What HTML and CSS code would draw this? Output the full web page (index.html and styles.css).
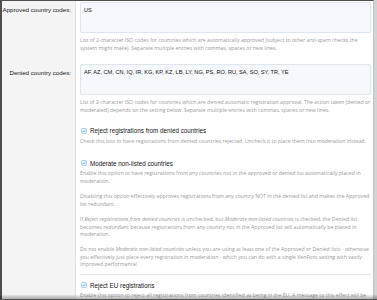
FILE: index.html
```html
<!DOCTYPE html>
<html>
<head>
    <title>Registration country options</title>
    <link rel="stylesheet" href="styles.css">
</head>
<body>

<div class="frame">

    <dl class="row row--first">
        <dt>Approved country codes:</dt>
        <dd>
            <textarea class="input">US</textarea>
            <p class="hint">List of 2-character ISO codes for countries which are automatically approved (subject to other anti-spam checks the<br>system might make). Separate multiple entries with commas, spaces or new lines.</p>
        </dd>
    </dl>

    <dl class="row">
        <dt>Denied country codes:</dt>
        <dd>
            <textarea class="input">AF, AZ, CM, CN, IQ, IR, KG, KP, KZ, LB, LY, NG, PS, RO, RU, SA, SO, SY, TR, YE</textarea>
            <p class="hint">List of 2-character ISO codes for countries which are denied automatic registration approval. The action taken (denied or<br>moderated) depends on the setting below. Separate multiple entries with commas, spaces or new lines.</p>
        </dd>
    </dl>

    <dl class="row row--checks">
        <dt></dt>
        <dd>
            <div class="check">
                <label class="check-label">
                    <svg class="box" viewBox="0 0 12 12"><rect x="1" y="1" width="10" height="10" rx="2"/><path d="M3.4 6.2 L5.2 8 L8.7 4.3"/></svg>
                    Reject registrations from denied countries
                </label>
                <p class="hint">Check this box to have registrations from denied countries rejected. Uncheck it to place them into moderation instead.</p>
            </div>

            <div class="check check--gap">
                <label class="check-label">
                    <svg class="box" viewBox="0 0 12 12"><rect x="1" y="1" width="10" height="10" rx="2"/><path d="M3.4 6.2 L5.2 8 L8.7 4.3"/></svg>
                    Moderate non-listed countries
                </label>
                <p class="hint">Enable this option to have registrations from any countries not in the approved or denied list automatically placed in<br>moderation.<br><br>Disabling this option effectively approves registrations from any country NOT in the denied list and makes the Approved<br>list redundant.<br><br>If <em>Reject registrations from denied countries</em> is unchecked, but <em>Moderate non-listed countries</em> is checked, the Denied list<br>becomes redundant because registrations from any country not in the Approved list will automatically be placed in<br>moderation.<br><br>Do not enable <em>Moderate non-listed countries</em> unless you are using at least one of the Approved or Denied lists - otherwise<br>you effectively just place every registration in moderation - which you can do with a single XenForo setting with vastly<br>improved performance!</p>
            </div>

            <div class="check check--split">
                <label class="check-label">
                    <svg class="box" viewBox="0 0 12 12"><rect x="1" y="1" width="10" height="10" rx="2"/><path d="M3.4 6.2 L5.2 8 L8.7 4.3"/></svg>
                    Reject EU registrations
                </label>
                <p class="hint">Enable this option to reject all registrations from countries identified as being in the EU. A message to this effect will be</p>
            </div>
        </dd>
    </dl>

</div>

<div class="bottom-bar"></div>

</body>
</html>
```

FILE: styles.css
```css
body {
    margin: 0;
    font-family: "Liberation Sans", Arial, sans-serif;
    background-color: #d3d3d3;
    color: #141414;
    overflow: hidden;
}

.frame {
    margin-right: 3px;
    background-color: #fff;
    border-top: 1px solid #4f4f4f;
    border-left: 2px solid #4f4f4f;
    border-right: 1px solid #c4c4c4;
}

.row {
    display: flex;
    margin: 0;
}

.row dt {
    width: 69px;
    flex: none;
    background-color: #f4f4f4;
    border-right: 1px solid #e2e2e2;
    text-align: right;
    padding: 9.4px 4px 0 0;
    font-size: 6.2px;
    line-height: 9px;
}

.row dd {
    flex: 1;
    margin: 0;
    padding: 6px 2px 6px 4px;
    min-width: 0;
}

.row--first dt {
    padding-top: 4.4px;
}

.row--first dd {
    padding-top: 1px;
}

.row--checks dd {
    padding-top: 6px;
    padding-bottom: 12px;
}

.input {
    display: block;
    box-sizing: border-box;
    width: 100%;
    height: 31px;
    margin: 0;
    padding: 3px 3px;
    border: 1px solid #dfe5ec;
    border-radius: 2px;
    background-color: #f5f8fc;
    font-family: inherit;
    font-size: 5.6px;
    line-height: 8px;
    color: #141414;
    resize: none;
    overflow: hidden;
}

.hint {
    margin: 4px 0 0;
    font-family: "Open Sans", "Liberation Sans", sans-serif;
    font-size: 5.2px;
    line-height: 7.6px;
    color: #9a9a9a;
    white-space: nowrap;
}

.check-label {
    display: flex;
    align-items: center;
    gap: 3px;
    font-size: 6.3px;
    line-height: 9px;
    color: #141414;
}

.box {
    width: 6px;
    height: 6px;
    margin-left: 1px;
    flex: none;
}

.box rect {
    fill: #e9f3fc;
    stroke: #5aa8e6;
    stroke-width: 1;
}

.box path {
    fill: none;
    stroke: #2f86d4;
    stroke-width: 1.3;
}

.check .hint {
    margin-top: 2.5px;
}

.check--gap {
    margin-top: 13.4px;
}

.check--split {
    margin-top: 5px;
    padding-top: 5.5px;
    border-top: 1px solid #e6e6e6;
}

.bottom-bar {
    position: fixed;
    left: 0;
    right: 0;
    bottom: 0;
    height: 4px;
    background: linear-gradient(to bottom, rgba(0, 0, 0, 0.06), rgba(0, 0, 0, 0.3));
    border-bottom: 1px solid #555;
}
```
